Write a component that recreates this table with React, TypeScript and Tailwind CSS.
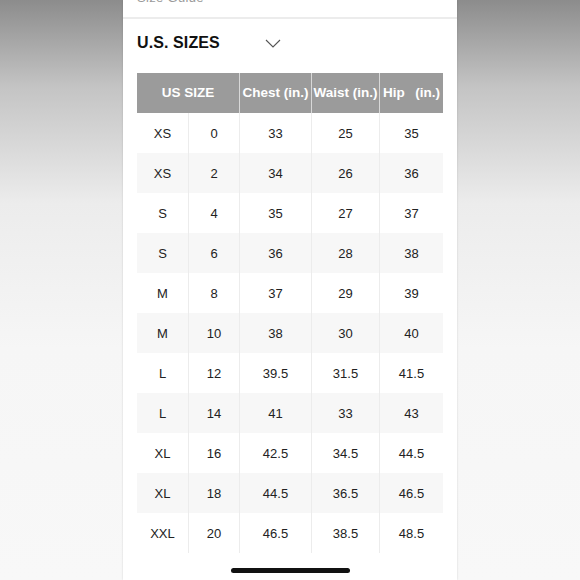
import React from "react";

const rows: [string, string, string, string, string][] = [
  ["XS", "0", "33", "25", "35"],
  ["XS", "2", "34", "26", "36"],
  ["S", "4", "35", "27", "37"],
  ["S", "6", "36", "28", "38"],
  ["M", "8", "37", "29", "39"],
  ["M", "10", "38", "30", "40"],
  ["L", "12", "39.5", "31.5", "41.5"],
  ["L", "14", "41", "33", "43"],
  ["XL", "16", "42.5", "34.5", "44.5"],
  ["XL", "18", "44.5", "36.5", "46.5"],
  ["XXL", "20", "46.5", "38.5", "48.5"],
];

export default function App() {
  return (
    <div
      className="w-[580px] h-[580px] overflow-hidden relative bg-[linear-gradient(to_bottom,#8c8c8c_0%,#c4c4c4_15%,#ececec_35%,#f6f6f6_60%,#f8f8f8_100%)]"
      style={{ fontFamily: '"Liberation Sans", Arial, sans-serif' }}
    >
      <div className="mx-auto w-[334px] h-[580px] bg-white shadow-[0_0_2px_rgba(0,0,0,0.15)] flex flex-col">
        <div className="h-[17px] relative overflow-hidden">
          <div className="absolute left-[14px] top-[-10px] text-[13px] leading-[15px] text-[#9a9a9a] tracking-wide">
            Size Guide
          </div>
        </div>
        <div className="h-[2px] bg-[#ececec]" />
        <div className="flex items-center h-[44px] mt-[2px] pl-[14px]">
          <span className="text-[16px] font-bold text-[#111] tracking-[0.1px] w-[128px]">U.S. SIZES</span>
          <svg width="16" height="9" viewBox="0 0 16 9">
            <path d="M1 1 L8 8 L15 1" fill="none" stroke="#555" strokeWidth="1.1" />
          </svg>
        </div>
        <div className="mt-[8px] mx-[14px] w-[306px]">
          <div className="grid grid-cols-[103px_72px_68px_63px] h-[40px] bg-[#9b9b9b] text-white font-bold text-[13.5px]">
            <div className="flex items-center justify-center pt-[1px] border-r border-[#d8d8d8]">US SIZE</div>
            <div className="flex items-center justify-center pt-[1px] border-r border-[#d8d8d8] whitespace-nowrap">Chest (in.)</div>
            <div className="flex items-center justify-center pt-[1px] border-r border-[#d8d8d8] whitespace-nowrap">Waist (in.)</div>
            <div className="flex items-center justify-between pt-[1px] px-[3px] whitespace-nowrap">
              <span>Hip</span>
              <span>(in.)</span>
            </div>
          </div>
          {rows.map((r, i) => (
            <div
              key={i}
              className={`grid grid-cols-[52px_51px_72px_68px_63px] h-[40px] text-[13px] text-[#222] ${
                i % 2 === 1 ? "bg-[#f7f7f7]" : "bg-white"
              }`}
            >
              {r.map((c, j) => (
                <div
                  key={j}
                  className={`flex items-center justify-center pt-[2px] ${j < 4 ? "border-r border-[#ececec]" : ""}`}
                >
                  {c}
                </div>
              ))}
            </div>
          ))}
        </div>
        <div className="flex-1" />
        <div className="flex justify-center pb-[7px]">
          <div className="w-[119px] h-[5px] rounded-full bg-[#111]" />
        </div>
      </div>
    </div>
  );
}
